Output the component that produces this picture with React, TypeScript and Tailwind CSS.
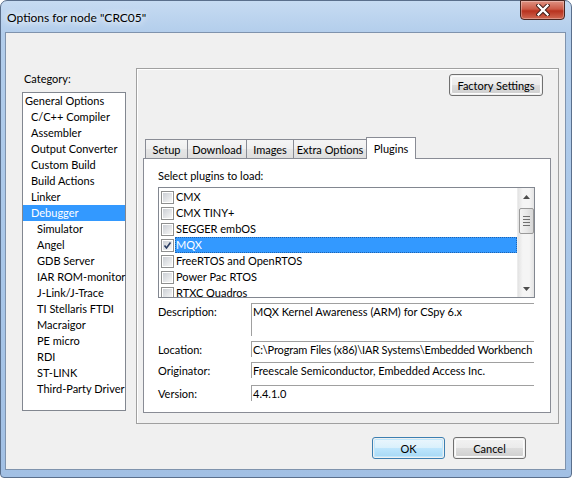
import React from 'react';

const categories: [string, number][] = [
  ['General Options', 0],
  ['C/C++ Compiler', 1],
  ['Assembler', 1],
  ['Output Converter', 1],
  ['Custom Build', 1],
  ['Build Actions', 1],
  ['Linker', 1],
  ['Debugger', 1],
  ['Simulator', 2],
  ['Angel', 2],
  ['GDB Server', 2],
  ['IAR ROM-monitor', 2],
  ['J-Link/J-Trace', 2],
  ['TI Stellaris FTDI', 2],
  ['Macraigor', 2],
  ['PE micro', 2],
  ['RDI', 2],
  ['ST-LINK', 2],
  ['Third-Party Driver', 2],
];

const plugins: [string, boolean][] = [
  ['CMX', false],
  ['CMX TINY+', false],
  ['SEGGER embOS', false],
  ['MQX', true],
  ['FreeRTOS and OpenRTOS', false],
  ['Power Pac RTOS', false],
  ['RTXC Quadros', false],
];

const tabs = [
  { label: 'Setup', w: 'w-[43px]' },
  { label: 'Download', w: 'w-[60px]' },
  { label: 'Images', w: 'w-[48px]' },
  { label: 'Extra Options', w: 'w-[74px]' },
];

const CheckBox = ({ checked }: { checked: boolean }) => (
  <span className="w-[13px] h-[13px] shrink-0 border border-[#8e8f8f] bg-white p-px flex">
    <span className="flex-1 bg-gradient-to-br from-[#cbcfd5] to-[#f7f7f7] flex items-center justify-center">
      {checked && (
        <svg width="9" height="9" viewBox="0 0 9 9">
          <path d="M1.5 4.5 L3.5 7 L7.5 1.5" fill="none" stroke="#2b3d63" strokeWidth="1.6" />
        </svg>
      )}
    </span>
  </span>
);

const Field = ({ label, value, slot, h, tight }: { label: string; value: string; slot: string; h: string; tight?: boolean }) => (
  <div className={`flex items-start ${slot}`}>
    <div className="w-[93px] pt-[1px] leading-[15px]">{label}</div>
    <div
      className={`w-[283px] ${h} border-t border-l border-[#a0a0a0] pl-[1px] leading-[15px] whitespace-nowrap overflow-hidden ${
        tight ? 'tracking-[-0.15px]' : ''
      }`}
    >
      {value}
    </div>
  </div>
);

const Button = ({ label, w, primary }: { label: string; w: string; primary?: boolean }) => (
  <div
    className={`${w} h-[22px] rounded-[3px] border ${primary ? 'border-[#3c7fb1]' : 'border-[#707070]'} p-px flex`}
  >
    <div
      className={`flex-1 rounded-[2px] flex items-center justify-center leading-none whitespace-nowrap ${
        primary
          ? 'bg-[linear-gradient(to_bottom,#eaf6fd_0%,#d9f0fc_50%,#bee6fd_51%,#a7d9f5_100%)] shadow-[inset_0_0_0_1px_#c0e7fc]'
          : 'bg-[linear-gradient(to_bottom,#f2f2f2_0%,#ebebeb_50%,#dddddd_51%,#cfcfcf_100%)] shadow-[inset_0_0_0_1px_#fcfcfc]'
      }`}
    >
      {label}
    </div>
  </div>
);

export default function App() {
  return (
    <div className="w-[575px] h-[483px] bg-white overflow-hidden font-['Segoe_UI',Lato,'Liberation_Sans',sans-serif] text-[11px] text-black">
      {/* window frame */}
      <div className="w-[572px] h-[478px] rounded-t-[7px] rounded-b-[4px] border border-[#5a6f8c] bg-[linear-gradient(to_bottom,#c6dbf2_0%,#b2cdeb_7%,#a8c6e8_60%,#a2c0e4_100%)] flex flex-col pl-[4px] pr-[5px] pb-[7px]">
        {/* title bar */}
        <div className="h-[31px] flex items-start justify-between">
          <div className="pl-[2px] pt-[9px] leading-[16px] text-[12px] [text-shadow:0_0_6px_#ffffff,0_0_10px_#ffffff]">
            Options for node "CRC05"
          </div>
          <div className="w-[45px] h-[20px] mr-[1px] -mt-px rounded-b-[4px] border border-[#4a2620] bg-[linear-gradient(to_bottom,#df9282_0%,#cc5a46_45%,#b8321e_55%,#d06852_100%)] shadow-[inset_0_0_0_1px_rgba(255,255,255,0.3)] flex items-center justify-center">
            <svg width="14" height="12" viewBox="0 0 14 12">
              <path d="M2.5 1.5 L11.5 10.5 M11.5 1.5 L2.5 10.5" stroke="#3b1a16" strokeWidth="4.2" strokeLinecap="square" />
              <path d="M2.5 1.5 L11.5 10.5 M11.5 1.5 L2.5 10.5" stroke="#ffffff" strokeWidth="2.4" strokeLinecap="square" />
            </svg>
          </div>
        </div>

        {/* client area */}
        <div className="flex-1 border border-[#7f93ad] bg-[#f0f0f0] flex flex-col">
          <div className="flex items-start pl-[16px] pt-[35px]">
            {/* category column */}
            <div className="w-[104px] flex flex-col">
              <div className="mt-[3px] pl-[2px] leading-[15px]">Category:</div>
              <div className="mt-[6px] h-[319px] border border-[#828790] bg-white">
                {categories.map(([name, level]) => {
                  const sel = name === 'Debugger';
                  return (
                    <div key={name} className={`h-[16px] leading-[16px] whitespace-nowrap ${sel ? 'bg-[#3399ff] text-white' : ''}`}>
                      <span className={level === 0 ? 'pl-[2px]' : level === 1 ? 'pl-[8px]' : 'pl-[14px]'}>{name}</span>
                    </div>
                  );
                })}
              </div>
            </div>

            {/* options panel */}
            <div className="ml-[10px] w-[423px] h-[356px] border border-[#a0a0a0] shadow-[inset_1px_1px_0_#ffffff] flex flex-col">
              <div className="flex justify-end pt-[5px] pr-[15px]">
                <Button label="Factory Settings" w="w-[94px]" />
              </div>

              <div className="mt-[39px] ml-[6px] flex flex-col">
                {/* tab strip */}
                <div className="flex items-end pl-[2px] h-[23px] relative z-10">
                  {tabs.map((t, i) => (
                    <div
                      key={t.label}
                      className={`${t.w} h-[19px] ${i > 0 ? '-ml-px' : ''} border border-b-0 border-[#898c95] bg-[linear-gradient(to_bottom,#f5f5f5_0%,#efefef_50%,#e6e6e6_51%,#dedede_100%)] flex items-center justify-center leading-none whitespace-nowrap`}
                    >
                      {t.label}
                    </div>
                  ))}
                  <div className="w-[50px] h-[22px] -ml-px -mb-px border border-b-0 border-[#898c95] bg-white flex items-start justify-center pt-[3px] leading-[15px]">
                    Plugins
                  </div>
                </div>

                {/* tab content */}
                <div className="w-[408px] h-[255px] border border-[#898c95] bg-white flex flex-col pl-[14px]">
                  <div className="pt-[9px] leading-[15px]">Select plugins to load:</div>
                  <div className="mt-[4px] w-[377px] h-[111px] border border-[#828790] flex">
                    <div className="flex-1 pt-px pl-[2px] overflow-hidden">
                      {plugins.map(([name, checked]) => (
                        <div key={name} className="h-[16px] flex items-center">
                          <CheckBox checked={checked} />
                          <div
                            className={`ml-[1px] h-[16px] leading-[16px] pl-px flex-1 whitespace-nowrap ${
                              checked ? 'bg-[#3399ff] text-white outline-1 outline-dotted outline-offset-[-1px] outline-[#1e63b0]' : ''
                            }`}
                          >
                            {name}
                          </div>
                        </div>
                      ))}
                    </div>
                    {/* scrollbar */}
                    <div className="w-[17px] bg-[linear-gradient(to_right,#e3e3e3,#f5f5f5_30%,#f5f5f5_70%,#e3e3e3)] border-l border-[#ececec] flex flex-col items-center">
                      <div className="h-[17px] w-full flex items-center justify-center">
                        <svg width="7" height="4" viewBox="0 0 7 4"><path d="M0 4 L3.5 0 L7 4 Z" fill="#4d4d4d" /></svg>
                      </div>
                      <div className="mt-[3px] w-[15px] h-[26px] rounded-[2px] border border-[#9a9a9a] bg-[linear-gradient(to_right,#f3f3f3,#e8e8e8_50%,#d6d6d6)] flex flex-col items-center justify-center gap-[2px]">
                        <div className="w-[7px] h-px bg-[#6f6f6f]" />
                        <div className="w-[7px] h-px bg-[#6f6f6f]" />
                        <div className="w-[7px] h-px bg-[#6f6f6f]" />
                        <div className="w-[7px] h-px bg-[#6f6f6f]" />
                      </div>
                      <div className="flex-1" />
                      <div className="h-[17px] w-full flex items-center justify-center">
                        <svg width="7" height="4" viewBox="0 0 7 4"><path d="M0 0 L3.5 4 L7 0 Z" fill="#4d4d4d" /></svg>
                      </div>
                    </div>
                  </div>

                  <div className="mt-[5px] flex flex-col">
                    <Field label="Description:" value="MQX Kernel Awareness (ARM) for CSpy 6.x" slot="h-[38px]" h="h-[33px]" />
                    <Field label="Location:" value="C:\Program Files (x86)\IAR Systems\Embedded Workbench" slot="h-[21px]" h="h-[16px]" tight />
                    <Field label="Originator:" value="Freescale Semiconductor, Embedded Access Inc." slot="h-[23px]" h="h-[16px]" />
                    <Field label="Version:" value="4.4.1.0" slot="h-[18px]" h="h-[16px]" />
                  </div>
                </div>
              </div>
            </div>
          </div>

          {/* dialog buttons */}
          <div className="mt-[13px] flex justify-end gap-[8px] pr-[39px]">
            <Button label="OK" w="w-[73px]" primary />
            <Button label="Cancel" w="w-[73px]" />
          </div>
        </div>
      </div>
    </div>
  );
}
